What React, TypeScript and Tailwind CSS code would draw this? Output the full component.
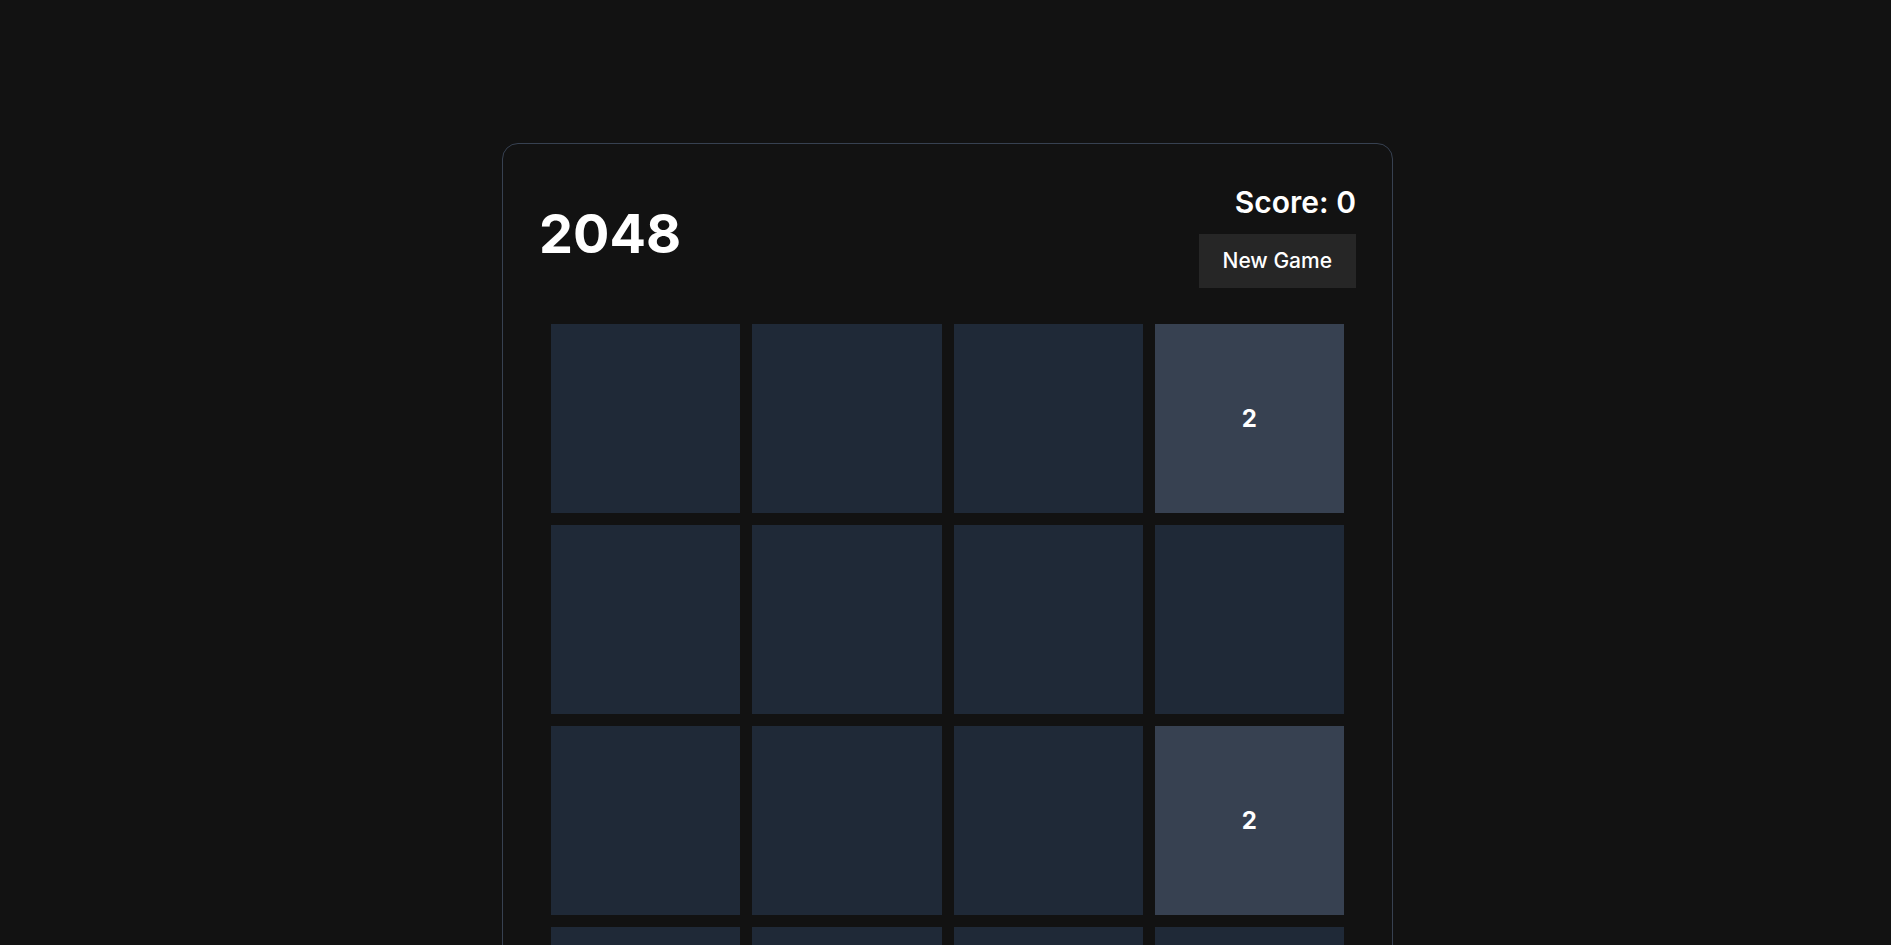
const board = [
  [0, 0, 0, 2],
  [0, 0, 0, 0],
  [0, 0, 0, 2],
  [0, 0, 0, 0],
];

function Tile({ value }: { value: number }) {
  return (
    <div
      className={
        value
          ? "flex h-[189px] items-center justify-center bg-[#374151] text-2xl font-bold text-white"
          : "h-[189px] bg-[#1f2937]"
      }
    >
      {value ? value : null}
    </div>
  );
}

export default function App() {
  return (
    <div
      className="min-h-screen bg-[#121212] pl-1 pt-[143px] text-white"
      style={{ fontFamily: "Inter, 'Noto Sans', sans-serif" }}
    >
      <div className="mx-auto w-[891px] rounded-2xl border border-[#374151] bg-[#121212] px-9 pt-[40px] pb-9">
        <div className="mb-6 flex items-center justify-between">
          <h1 className="mb-[5px] text-[54px] font-bold leading-none">2048</h1>
          <div className="flex flex-col items-end">
            <div className="mb-[14px] text-3xl font-semibold">Score: 0</div>
            <button className="flex h-[54px] items-center bg-[#262626] px-6 text-[21px] font-medium text-white">
              New Game
            </button>
          </div>
        </div>
        <div className="grid grid-cols-4 gap-3 p-3">
          {board.flat().map((v, i) => (
            <Tile key={i} value={v} />
          ))}
        </div>
      </div>
    </div>
  );
}
